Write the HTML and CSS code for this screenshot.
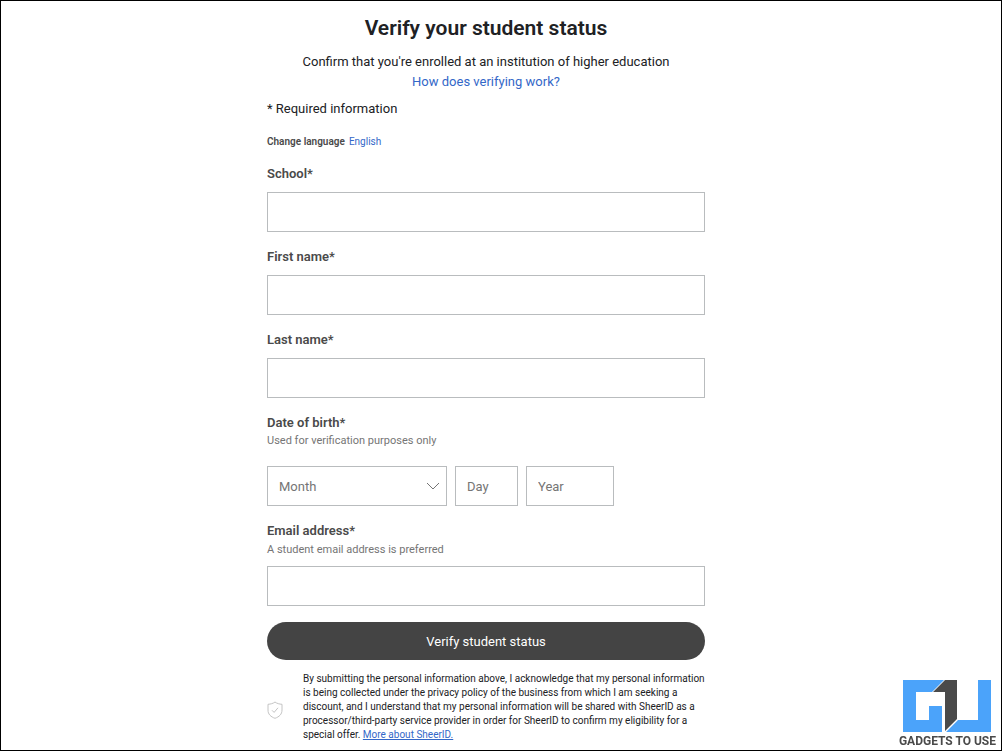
FILE: index.html
```html
<!DOCTYPE html>
<html lang="en">
<head>
    <meta charset="UTF-8">
    <meta name="viewport" content="width=device-width, initial-scale=1.0">
    <title>Verify your student status</title>
    <link rel="stylesheet" href="styles.css">
</head>
<body>
    <main class="page">
        <form class="verify-form">
            <div class="header">
                <h1>Verify your student status</h1>
                <p>Confirm that you're enrolled at an institution of higher education</p>
                <a href="#">How does verifying work?</a>
            </div>
            <p class="required">* Required information</p>
            <p class="language"><strong>Change language</strong><a href="#">English</a></p>

            <div class="form-group">
                <label for="school">School*</label>
                <input type="text" id="school">
            </div>
            <div class="form-group">
                <label for="first-name">First name*</label>
                <input type="text" id="first-name">
            </div>
            <div class="form-group">
                <label for="last-name">Last name*</label>
                <input type="text" id="last-name">
            </div>
            <div class="form-group">
                <label for="month">Date of birth*</label>
                <p class="hint">Used for verification purposes only</p>
                <div class="date-row">
                    <div class="select-wrap">
                        <select id="month">
                            <option>Month</option>
                            <option>January</option>
                            <option>February</option>
                            <option>March</option>
                            <option>April</option>
                            <option>May</option>
                            <option>June</option>
                            <option>July</option>
                            <option>August</option>
                            <option>September</option>
                            <option>October</option>
                            <option>November</option>
                            <option>December</option>
                        </select>
                        <svg class="chevron" viewBox="0 0 14 8" aria-hidden="true">
                            <path d="M1 1l6 6 6-6" fill="none" stroke="#757575" stroke-width="1"/>
                        </svg>
                    </div>
                    <input type="text" class="day" placeholder="Day" aria-label="Day">
                    <input type="text" class="year" placeholder="Year" aria-label="Year">
                </div>
            </div>
            <div class="form-group email">
                <label for="email">Email address*</label>
                <p class="hint">A student email address is preferred</p>
                <input type="email" id="email">
            </div>

            <button type="submit" class="submit-btn">Verify student status</button>

            <div class="disclaimer">
                <svg class="shield" viewBox="0 0 16 18" aria-hidden="true">
                    <path d="M8 1C6 2.600 3.500 3.100 1 3.300V9c0 4.300 2.800 6.800 7 8.300 4.200-1.500 7-4 7-8.300V3.300C12.500 3.100 10 2.600 8 1z" fill="none" stroke="#c4c4c4"/>
                    <path d="M5 9.300l2.100 2.100L11 6.800" fill="none" stroke="#c4c4c4"/>
                </svg>
                <p>By submitting the personal information above, I acknowledge that my personal information is being collected under the privacy policy of the business from which I am seeking a discount, and I understand that my personal information will be shared with SheerID as a processor/third-party service provider in order for SheerID to confirm my eligibility for a special offer. <a href="#">More about SheerID.</a></p>
            </div>
        </form>
    </main>

    <div class="watermark">
        <svg viewBox="0 0 88 52" aria-hidden="true">
            <path d="M0 0H41L29 12H13V40H26V26H39V52H0z" fill="#4ba3fa"/>
            <path d="M42 0H54V39L42 51V12H30z" fill="#4a4a4a"/>
            <path d="M75 0H88V52H43L55 40H75z" fill="#4ba3fa"/>
        </svg>
        <span>GADGETS TO USE</span>
    </div>
</body>
</html>
```
FILE: styles.css
```css
* {
    box-sizing: border-box;
}

body {
    font-family: Roboto, "Liberation Sans", sans-serif;
    margin: 0;
    color: #202124;
    background: white;
    font-size: 13px;
    line-height: 20px;
}

h1,
p {
    margin: 0;
}

a {
    color: #3367c8;
    text-decoration: none;
}

.page {
    min-height: 100vh;
    border: 1px solid #000;
    padding: 13px 31px 4px 1px;
}

.verify-form {
    max-width: 438px;
    margin: 0 auto;
}

.header {
    text-align: center;
}

.header h1 {
    font-size: 21px;
    line-height: 28px;
    font-weight: 600;
    margin-bottom: 10px;
}

.required {
    margin-top: 7px;
}

.language {
    display: flex;
    gap: 4px;
    font-size: 10px;
    margin: 13px 0 12px;
}

.language strong {
    font-weight: 600;
    color: #4a4a4a;
}

.form-group {
    margin-bottom: 15px;
}

.form-group label {
    display: block;
    margin-bottom: 8px;
    color: #4a4a4a;
    font-weight: 600;
}

.form-group label:has(+ .hint) {
    margin-bottom: 0;
}

.hint {
    color: #757575;
    font-size: 11px;
    line-height: 16px;
    margin-bottom: 17px;
}

.form-group.email {
    margin-bottom: 16px;
}

.email .hint {
    margin: 1px 0 8px;
}

input,
select {
    display: block;
    width: 100%;
    height: 40px;
    padding: 0 11px;
    border: 1px solid #b9bcbe;
    border-radius: 0;
    background: white;
    color: #757575;
    font-family: inherit;
    font-size: 13px;
}

input::placeholder {
    color: #757575;
}

select {
    appearance: none;
}

.date-row {
    display: flex;
    gap: 8px;
}

.select-wrap {
    position: relative;
    width: 180px;
}

.chevron {
    position: absolute;
    right: 7px;
    top: 16px;
    width: 14px;
    height: 8px;
    pointer-events: none;
}

.date-row .day {
    width: 63px;
}

.date-row .year {
    width: 88px;
}

.submit-btn {
    width: 100%;
    height: 38px;
    border: none;
    border-radius: 19px;
    background: #444;
    color: white;
    font-family: inherit;
    font-size: 13px;
    cursor: pointer;
}

.disclaimer {
    display: flex;
    align-items: center;
    gap: 20px;
    margin-top: 12px;
    font-size: 10px;
    line-height: 14px;
}

.disclaimer a {
    text-decoration: underline;
}

.shield {
    flex: none;
    width: 16px;
    height: 18px;
    margin-top: 6px;
}

.watermark {
    position: fixed;
    right: 6px;
    bottom: 4px;
    display: flex;
    flex-direction: column;
    align-items: center;
    color: #4a4a4a;
    font-size: 12px;
    line-height: 12px;
    font-weight: bold;
}

.watermark svg {
    width: 88px;
    height: 52px;
    margin-bottom: 3px;
}
```
